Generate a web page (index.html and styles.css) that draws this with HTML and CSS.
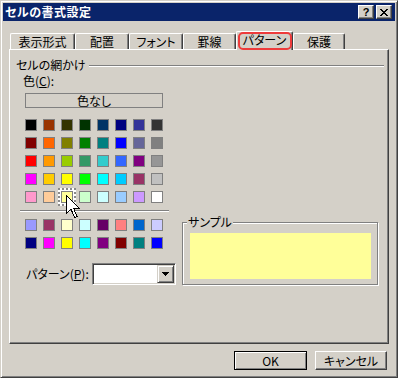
FILE: index.html
```html
<!DOCTYPE html>
<html lang="ja">
<head>
    <meta charset="UTF-8">
    <meta name="viewport" content="width=device-width, initial-scale=1.0">
    <title>セルの書式設定</title>
    <link rel="stylesheet" href="styles.css">
</head>
<body>
    <div class="dialog">
        <div class="titlebar">
            <span class="title">セルの書式設定</span>
            <span class="title-btn">?</span>
            <span class="title-btn">
                <svg width="8" height="7" viewBox="0 0 8 7" shape-rendering="crispEdges">
                    <path d="M0 0h2v1h-2zM6 0h2v1h-2zM1 1h2v1h-2zM5 1h2v1h-2zM2 2h4v1h-4zM3 3h2v1h-2zM2 4h4v1h-4zM1 5h2v1h-2zM5 5h2v1h-2zM0 6h2v1h-2zM6 6h2v1h-2z" fill="#000"/>
                </svg>
            </span>
        </div>

        <div class="tabs">
            <div class="tab t1">表示形式</div>
            <div class="tab t2">配置</div>
            <div class="tab t3">フォント</div>
            <div class="tab t4">罫線</div>
            <div class="tab t5 active">パターン</div>
            <div class="tab t6">保護</div>
        </div>

        <div class="panel">
            <div class="group-head">
                <span>セルの網かけ</span>
                <span class="rule"></span>
            </div>
            <div class="panel-body">
                <div class="left">
                    <div class="color-label">色(<u>C</u>):</div>
                    <div class="none-btn">色なし</div>
                    <div class="swatches">
                        <span class="swatch" style="background:#000000"></span>
                        <span class="swatch" style="background:#993300"></span>
                        <span class="swatch" style="background:#333300"></span>
                        <span class="swatch" style="background:#003300"></span>
                        <span class="swatch" style="background:#003366"></span>
                        <span class="swatch" style="background:#000080"></span>
                        <span class="swatch" style="background:#333399"></span>
                        <span class="swatch" style="background:#333333"></span>

                        <span class="swatch" style="background:#800000"></span>
                        <span class="swatch" style="background:#ff6600"></span>
                        <span class="swatch" style="background:#808000"></span>
                        <span class="swatch" style="background:#008000"></span>
                        <span class="swatch" style="background:#008080"></span>
                        <span class="swatch" style="background:#0000ff"></span>
                        <span class="swatch" style="background:#666699"></span>
                        <span class="swatch" style="background:#808080"></span>

                        <span class="swatch" style="background:#ff0000"></span>
                        <span class="swatch" style="background:#ff9900"></span>
                        <span class="swatch" style="background:#99cc00"></span>
                        <span class="swatch" style="background:#339966"></span>
                        <span class="swatch" style="background:#33cccc"></span>
                        <span class="swatch" style="background:#3366ff"></span>
                        <span class="swatch" style="background:#800080"></span>
                        <span class="swatch" style="background:#969696"></span>

                        <span class="swatch" style="background:#ff00ff"></span>
                        <span class="swatch" style="background:#ffcc00"></span>
                        <span class="swatch" style="background:#ffff00"></span>
                        <span class="swatch" style="background:#00ff00"></span>
                        <span class="swatch" style="background:#00ffff"></span>
                        <span class="swatch" style="background:#00ccff"></span>
                        <span class="swatch" style="background:#993366"></span>
                        <span class="swatch" style="background:#c0c0c0"></span>

                        <span class="swatch" style="background:#ff99cc"></span>
                        <span class="swatch" style="background:#ffcc99"></span>
                        <span class="swatch selected" style="background:#ffff99"></span>
                        <span class="swatch" style="background:#ccffcc"></span>
                        <span class="swatch" style="background:#ccffff"></span>
                        <span class="swatch" style="background:#99ccff"></span>
                        <span class="swatch" style="background:#cc99ff"></span>
                        <span class="swatch" style="background:#ffffff"></span>
                    </div>
                    <div class="sep"></div>
                    <div class="swatches extra">
                        <span class="swatch" style="background:#9999ff"></span>
                        <span class="swatch" style="background:#993366"></span>
                        <span class="swatch" style="background:#ffffcc"></span>
                        <span class="swatch" style="background:#ccffff"></span>
                        <span class="swatch" style="background:#660066"></span>
                        <span class="swatch" style="background:#ff8080"></span>
                        <span class="swatch" style="background:#0066cc"></span>
                        <span class="swatch" style="background:#ccccff"></span>

                        <span class="swatch" style="background:#000080"></span>
                        <span class="swatch" style="background:#ff00ff"></span>
                        <span class="swatch" style="background:#ffff00"></span>
                        <span class="swatch" style="background:#00ffff"></span>
                        <span class="swatch" style="background:#800080"></span>
                        <span class="swatch" style="background:#800000"></span>
                        <span class="swatch" style="background:#008080"></span>
                        <span class="swatch" style="background:#0000ff"></span>
                    </div>
                    <div class="pattern-row">
                        <span class="pattern-label">パターン(<u>P</u>):</span>
                        <div class="combo">
                            <span class="combo-field"></span>
                            <span class="combo-btn">
                                <svg width="7" height="4" viewBox="0 0 7 4" shape-rendering="crispEdges">
                                    <path d="M0 0h7v1h-7zM1 1h5v1h-5zM2 2h3v1h-3zM3 3h1v1h-1z" fill="#000"/>
                                </svg>
                            </span>
                        </div>
                    </div>
                </div>

                <div class="sample">
                    <span class="sample-title">サンプル</span>
                    <div class="sample-fill"></div>
                </div>
            </div>
        </div>

        <div class="actions">
            <button class="btn default">OK</button>
            <button class="btn">キャンセル</button>
        </div>

        <!-- mouse pointer over the chosen colour -->
        <svg class="cursor" width="14" height="24" viewBox="0 0 14 24" shape-rendering="crispEdges">
            <polygon points="0.5,0.5 0.5,18.5 5,14 8.5,22.5 11,21.5 7.5,13 13,13" fill="#fff" stroke="#000" stroke-width="1"/>
        </svg>
    </div>
</body>
</html>
```

FILE: styles.css
```css
* {
    box-sizing: border-box;
}
body {
    margin: 0;
    background-color: #d4d0c8;
    font-family: "Noto Sans CJK JP", sans-serif;
    font-size: 12px;
    font-feature-settings: "palt";
    color: #000;
}
.dialog {
    position: relative;
    width: 398px;
    height: 378px;
    border: 1px solid;
    border-color: #d4d0c8 #404040 #404040 #d4d0c8;
    box-shadow: inset 1px 1px 0 #fff, inset -1px -1px 0 #808080;
    padding: 2px;
    display: flex;
    flex-direction: column;
}
.titlebar {
    height: 18px;
    background-color: #0a246a;
    color: white;
    display: flex;
    align-items: center;
    padding: 0 3px 0 2px;
}
.title {
    flex: 1;
    font-weight: bold;
    line-height: 14px;
    letter-spacing: 0.5px;
}
.title-btn {
    width: 16px;
    height: 14px;
    margin-left: 2px;
    background-color: #d4d0c8;
    border: 1px solid;
    border-color: #fff #404040 #404040 #fff;
    box-shadow: inset -1px -1px 0 #808080;
    color: #000;
    display: flex;
    align-items: center;
    justify-content: center;
    font: bold 11px "Liberation Sans", sans-serif;
}

/* tabs */
.tabs {
    height: 28px;
    display: flex;
    align-items: flex-end;
    padding-left: 7px;
}
.tab {
    height: 16px;
    border: 1px solid;
    border-bottom: none;
    border-color: #fff #404040 #404040 #fff;
    box-shadow: inset -1px 0 0 #808080;
    border-radius: 2px 2px 0 0;
    text-align: center;
    line-height: 15px;
    background-color: #d4d0c8;
}
.t1 { width: 65px; }
.t2 { width: 54px; }
.t3 { width: 54px; }
.t4 { width: 53px; }
.t5 { width: 57px; }
.t6 { width: 52px; }
.tab.active {
    position: relative;
    z-index: 1;
    height: 19px;
    margin-bottom: -1px;
    line-height: 16px;
}
.tab.active::after {
    content: "";
    position: absolute;
    top: 0;
    left: 1px;
    right: 0;
    bottom: 0;
    border: 2px solid #ee3b3b;
    border-radius: 5px;
}

/* panel */
.panel {
    margin-left: 6px;
    width: 380px;
    height: 295px;
    border: 1px solid;
    border-color: #fff #404040 #404040 #fff;
    box-shadow: inset -1px -1px 0 #808080;
    padding: 8px 4px 0 6px;
}
.group-head {
    display: flex;
    align-items: center;
    height: 14px;
    line-height: 14px;
}
.group-head .rule {
    flex: 1;
    margin: 1px 0 0 3px;
    border-top: 1px solid #808080;
    border-bottom: 1px solid #fff;
}
.panel-body {
    display: flex;
    align-items: flex-end;
}
.left {
    width: 166px;
}
.color-label {
    margin: 2px 0 0 7px;
    height: 14px;
    line-height: 14px;
}
.none-btn {
    margin: 5px 0 0 9px;
    width: 138px;
    height: 15px;
    border: 1px solid #808080;
    text-align: center;
    line-height: 13px;
}
.swatches {
    margin: 11px 0 0 9px;
    display: grid;
    grid-template-columns: repeat(8, 12px);
    grid-auto-rows: 12px;
    gap: 6px;
}
.swatches.extra {
    margin-top: 7px;
}
.swatch {
    border: 1px solid #808080;
}
.swatch.selected {
    box-shadow: 0 0 0 3px #fff;
    outline: 2px dotted #8a8a8a;
    outline-offset: 1px;
}
.sep {
    margin: 7px 0 0 4px;
    width: 149px;
    border-top: 1px solid #808080;
    border-bottom: 1px solid #fff;
}
.pattern-row {
    margin: 14px 0 0 10px;
    height: 22px;
    display: flex;
    align-items: center;
}
.pattern-label {
    width: 66px;
    line-height: 14px;
}
.combo {
    width: 84px;
    height: 22px;
    border: 1px solid;
    border-color: #808080 #fff #fff #808080;
    box-shadow: inset 1px 1px 0 #404040, inset -1px -1px 0 #d4d0c8;
    padding: 1px;
    display: flex;
    background-color: #fff;
}
.combo-field {
    flex: 1;
    background-color: #fff;
}
.combo-btn {
    width: 17px;
    border: 1px solid;
    border-color: #d4d0c8 #404040 #404040 #d4d0c8;
    box-shadow: inset 1px 1px 0 #fff, inset -1px -1px 0 #808080;
    background-color: #d4d0c8;
    display: flex;
    align-items: center;
    justify-content: center;
}

/* sample box */
.sample {
    width: 196px;
    border: 1px solid #808080;
    box-shadow: inset 1px 1px 0 #fff, 1px 1px 0 #fff;
    padding: 0 6px 5px 7px;
}
.sample-title {
    display: block;
    width: max-content;
    margin: -8px 0 0 -3px;
    padding: 0 1px;
    line-height: 14px;
    background-color: #d4d0c8;
}
.sample-fill {
    margin-top: 4px;
    height: 46px;
    background-color: #ffff99;
}

/* buttons */
.actions {
    display: flex;
    justify-content: flex-end;
    gap: 8px;
    margin-top: 7px;
    padding-right: 8px;
}
.btn {
    width: 72px;
    height: 19px;
    padding: 0;
    font: inherit;
    line-height: 15px;
    color: #000;
    background-color: #d4d0c8;
    border: 1px solid;
    border-color: #fff #404040 #404040 #fff;
    box-shadow: inset -1px -1px 0 #808080;
}
.btn.default {
    width: 73px;
    border-color: #000;
    box-shadow: inset 1px 1px 0 #fff, inset -1px -1px 0 #808080;
}
.cursor {
    position: absolute;
    left: 65px;
    top: 194px;
}
```
